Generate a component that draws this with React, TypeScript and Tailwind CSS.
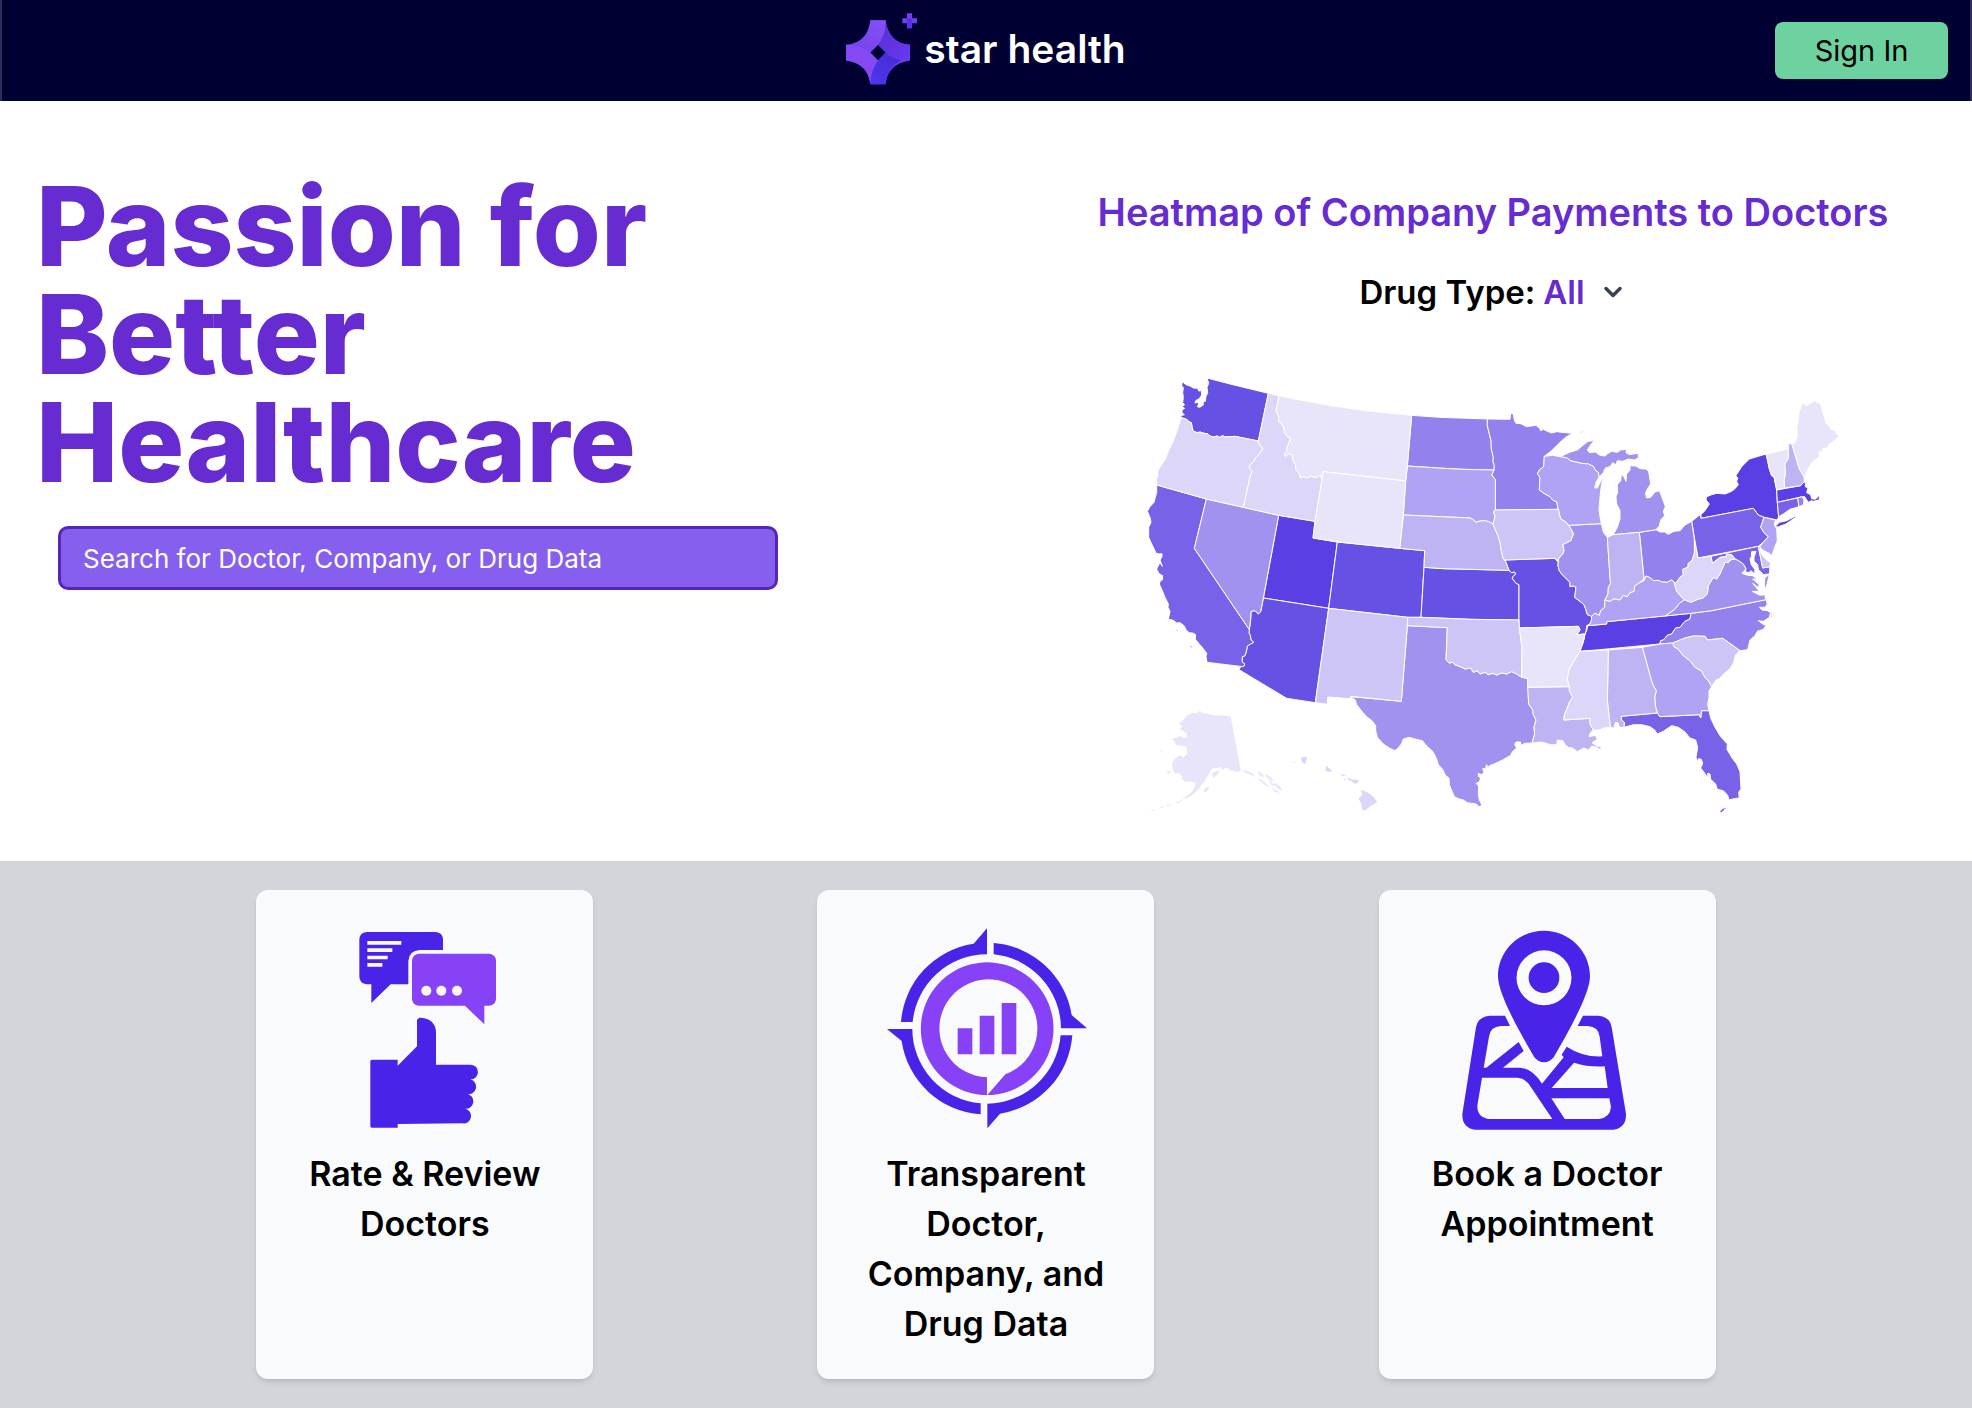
import type { ReactNode } from "react";
import { ChevronDown } from "lucide-react";

type Shade = { fill: string; shapes: Record<string, string> };

// State outlines grouped by payment bucket, darkest first.
const shades: Shade[] = [
  {
    fill: "#5a40e4",
    shapes: {
      UT: "M446 464L555 482 549 532 622 544 596 743 400 712Z",
      NY: "M1713 473L1713 462 1725 450 1738 430 1728 418 1730 408 1745 402 1760 398 1785 400 1805 392 1815 384 1825 372 1820 362 1824 352 1817 346 1835 318 1858 295 1885 287 1908 280 1913 300 1918 325 1925 345 1932 348 1940 388 1942 425 1946 468 1942 478 1902 470 1885 463 1870 443ZM1938 495L1948 485 1970 480 2000 464 1995 471 1968 490 1940 500Z",
      TN: "M1373 795L1430 790 1430 783 1683 758 1680 775 1665 782 1650 800 1637 802 1625 820 1612 824 1600 838 1592 840 1590 850 1410 867 1350 872 1354 860 1358 850 1362 835 1365 820 1370 810Z",
      MA: "M1940 388L2012 375 2018 364 2026 365 2026 378 2034 382 2030 396 2042 402 2045 414 2056 416 2064 408 2060 404 2069 408 2067 418 2050 422 2044 420 2036 425 2030 418 2024 408 2017 408 1942 425Z",
    },
  },
  {
    fill: "#6651e5",
    shapes: {
      WA: "M157 63L168 72 182 77 190 82 203 83 206 91 214 90 215 103 208 114 197 120 195 127 203 125 206 130 202 138 209 140 220 133 219 124 226 122 228 106 233 98 231 80 236 68 231 52 300 70 415 98 385 241 350 234 315 227 285 229 278 225 268 230 262 226 250 229 240 226 232 219 222 218 210 214 202 216 190 212 188 206 186 198 184 186 178 184 170 176 154 171 152 165 163 162 156 156 156 148 164 143 156 138 164 132 158 126 160 110 158 95 160 82 155 74Z",
      CO: "M622 544L809 563 884 570 882 620 873 770 833 770 596 743Z",
      KS: "M882 620L940 624 1137 629 1145 636 1154 634 1157 640 1149 648 1147 654 1153 661 1158 668 1167 672 1167 778 1020 776 873 770Z",
      MO: "M1125 598L1275 593 1280 600 1285 603 1284 615 1288 630 1295 640 1305 650 1320 665 1320 678 1330 676 1338 680 1336 695 1334 710 1350 722 1362 732 1368 748 1372 762 1385 767 1384 780 1380 790 1370 795 1368 812 1365 820 1340 822 1348 812 1350 806 1345 797 1168 802 1167 778 1167 672 1158 668 1153 661 1147 654 1149 648 1157 640 1154 634 1145 636 1137 629Z",
      AZ: "M400 712L596 743 556 1026 470 1013 327 927 332 918 342 916 344 910 336 903 337 888 345 885 350 868 352 856 362 850 371 845 363 838 361 825 357 817 358 807 362 775 363 752 375 750 385 760 392 753Z",
    },
  },
  {
    fill: "#7862e8",
    shapes: {
      CA: "M80 373L229 415 193 563 358 807 357 817 361 825 363 838 371 845 362 850 352 856 350 868 345 885 337 888 336 903 344 910 342 916 338 918 231 905 228 888 230 878 218 862 206 848 196 836 197 822 188 817 178 816 168 808 163 796 150 786 140 787 130 779 115 776 120 752 114 740 115 730 104 708 97 690 88 670 91 660 97 658 98 645 88 640 80 626 83 618 90 606 97 617 90 598 96 588 96 579 88 580 78 578 73 566 66 552 56 530 56 500 63 485 60 470 52 452 60 438 72 425 76 410 80 396Z M119 806l8 3-4 2zM132 806l14 3-4 3zM175 852l9 4 6 3-6 2zM176 873l6 6-3 1z",
      PA: "M1685 482L1710 462 1713 473 1870 443 1885 463 1902 470 1892 500 1902 516 1915 528 1900 545 1885 557 1704 592 1693 530Z",
      MD: "M1743 587L1885 557 1898 622 1920 618 1918 640 1900 642 1893 634 1885 627 1883 612 1872 602 1872 590 1878 572 1865 573 1864 588 1860 595 1864 612 1874 626 1875 640 1862 630 1858 636 1845 633 1848 625 1840 610 1825 600 1815 595 1805 582 1790 580 1788 588 1770 590 1760 598 1747 608Z",
      FL: "M1473 1067L1582 1057 1590 1068 1708 1062 1712 1072 1715 1050 1737 1050 1742 1072 1755 1100 1772 1128 1792 1150 1791 1166 1806 1192 1820 1210 1830 1233 1833 1285 1826 1295 1828 1312 1812 1314 1797 1318 1793 1304 1780 1290 1762 1286 1757 1270 1742 1256 1740 1240 1733 1238 1734 1252 1720 1232 1712 1222 1718 1208 1714 1196 1705 1194 1702 1204 1698 1190 1703 1160 1697 1138 1680 1132 1665 1114 1645 1100 1625 1095 1600 1112 1582 1120 1574 1108 1560 1098 1535 1092 1510 1092 1482 1100 1483 1085 1475 1078ZM1768 1354L1778 1343 1793 1340 1782 1349 1774 1357Z",
      CT: "M1942 425L2003 412 2007 438 1980 446 1960 460 1946 468Z",
    },
  },
  {
    fill: "#9382ed",
    shapes: {
      ND: "M845 164L930 170 1072 175 1072 195 1078 220 1083 240 1084 265 1090 290 1089 302 1093 315 1092 328 1000 326 940 323 832 316Z",
      MN: "M1072 175L1140 176 1142 158 1150 160 1153 178 1158 188 1172 189 1190 198 1204 196 1218 194 1228 202 1232 210 1240 206 1252 212 1265 217 1280 213 1295 215 1328 218 1308 229 1290 245 1265 270 1243 287 1241 318 1228 328 1222 340 1230 350 1228 388 1242 398 1260 408 1268 418 1280 424 1285 446 1096 448 1096 357 1085 343 1092 328 1093 315 1089 302 1090 290 1084 265 1083 240 1078 220 1072 195Z",
      OH: "M1528 515L1578 507 1590 514 1604 514 1615 521 1632 512 1650 510 1665 493 1685 482 1693 535 1695 560 1693 578 1686 600 1675 608 1674 620 1658 626 1660 642 1650 650 1640 670 1632 664 1624 658 1612 665 1595 664 1585 659 1570 660 1562 652 1548 646 1542 655Z",
      NC: "M1908 717L1912 730 1905 740 1888 740 1896 748 1912 750 1922 756 1918 770 1900 782 1885 780 1898 790 1908 794 1900 806 1882 812 1875 825 1860 838 1853 867 1830 870 1778 833 1733 838 1725 827 1690 826 1665 832 1628 847 1590 850 1592 840 1600 838 1612 824 1625 820 1637 802 1650 800 1665 782 1680 775 1683 758 1745 750ZM1914 732L1928 762 1918 796 1924 762Z",
      RI: "M2003 412L2017 408 2022 420 2020 433 2007 438Z",
    },
  },
  {
    fill: "#a192f0",
    shapes: {
      NV: "M229 415L340 440 446 464 400 712 392 753 385 760 375 750 363 752 362 775 358 807 193 563Z",
      TX: "M832 795L952 801 948 898 958 908 966 904 975 912 995 920 1005 925 1022 922 1030 935 1042 930 1050 940 1065 935 1075 942 1088 938 1100 943 1115 937 1130 940 1145 933 1160 940 1175 950 1193 953 1196 1030 1208 1048 1210 1062 1218 1078 1212 1100 1214 1120 1206 1147 1185 1148 1172 1154 1172 1144 1158 1144 1154 1152 1160 1162 1148 1172 1142 1184 1118 1198 1090 1211 1078 1215 1074 1222 1070 1212 1066 1224 1058 1224 1062 1234 1056 1242 1044 1238 1046 1248 1052 1252 1048 1264 1038 1268 1046 1276 1045 1300 1048 1318 1056 1334 1048 1338 1038 1330 1012 1326 1000 1318 985 1314 973 1308 966 1292 958 1272 957 1252 946 1244 938 1226 925 1212 920 1195 908 1172 892 1158 877 1140 858 1136 838 1130 820 1135 814 1150 806 1160 795 1170 778 1162 760 1150 742 1130 737 1110 737 1095 726 1080 710 1068 694 1050 680 1032 676 1018 662 1008 814 1022Z",
      IL: "M1315 494L1414 489 1420 515 1432 530 1440 650 1442 668 1435 680 1434 700 1425 718 1424 740 1412 750 1408 764 1394 758 1385 767 1372 762 1368 748 1362 732 1350 722 1334 710 1336 695 1338 680 1330 676 1320 678 1320 665 1305 650 1295 640 1288 630 1284 615 1285 595 1298 580 1302 570 1298 552 1310 546 1322 540 1330 520 1325 508Z",
      MI: "M1290 288L1308 280 1322 274 1342 268 1360 253 1375 242 1393 240 1382 252 1372 268 1378 276 1396 274 1410 284 1424 286 1432 280 1445 272 1462 275 1472 268 1490 266 1488 276 1498 282 1524 278 1526 290 1514 298 1495 295 1478 302 1462 300 1458 312 1448 306 1440 318 1426 322 1420 336 1407 350 1405 335 1397 330 1390 317 1375 310 1355 308 1320 300 1312 292ZM1341 223L1354 213 1366 207 1358 215ZM1500 315L1518 316 1530 324 1548 325 1556 332 1558 345 1562 370 1552 385 1546 398 1550 412 1562 410 1575 394 1588 390 1596 410 1606 438 1600 452 1604 465 1592 478 1588 495 1578 507 1528 515 1450 522 1462 500 1470 475 1470 450 1460 430 1458 408 1463 395 1462 372 1472 360 1474 342 1480 345 1488 362 1490 340 1500 328Z",
      VA: "M1815 595L1825 600 1840 610 1848 625 1836 638 1850 643 1868 645 1882 656 1868 655 1888 672 1884 680 1868 668 1888 692 1866 692 1890 704 1904 702 1908 717 1745 750 1683 758 1605 766 1635 745 1648 728 1663 717 1683 725 1705 715 1718 713 1732 700 1735 675 1750 650 1760 655 1770 640 1785 605 1795 606 1800 598ZM1905 650L1918 642 1912 668 1904 690 1903 668Z",
    },
  },
  {
    fill: "#b0a3f3",
    shapes: {
      SD: "M832 316L940 323 1000 326 1092 328 1085 343 1096 357 1096 448 1091 452 1095 470 1089 490 1078 484 1065 480 1050 481 1038 485 1028 476 1020 472 820 463 827 361Z",
      WI: "M1243 287L1268 284 1290 288 1312 292 1320 300 1355 308 1375 310 1390 317 1397 330 1405 335 1407 350 1398 365 1394 382 1402 382 1412 362 1422 345 1416 365 1412 390 1410 412 1407 445 1410 468 1414 489 1315 494 1308 484 1292 475 1288 460 1280 424 1268 418 1260 408 1242 398 1228 388 1230 350 1222 340 1228 328 1241 318Z",
      KY: "M1385 767L1394 758 1408 764 1412 750 1424 740 1425 718 1440 722 1452 714 1470 718 1480 704 1492 708 1500 696 1512 692 1514 676 1525 668 1542 660 1548 646 1562 652 1570 660 1585 659 1595 664 1612 665 1624 658 1632 664 1640 692 1650 704 1663 717 1648 728 1635 745 1605 766 1430 783 1430 790 1373 795 1380 790 1384 780Z",
      GA: "M1537 860L1590 850 1628 847 1632 858 1645 866 1660 885 1680 900 1695 920 1714 930 1725 950 1735 960 1745 978 1737 990 1737 1010 1733 1030 1737 1050 1715 1050 1712 1072 1708 1062 1590 1068 1582 1057 1577 1040 1574 1010 1579 990 1570 975 1563 955Z",
      NJ: "M1902 470L1936 478 1933 492 1940 505 1942 540 1934 560 1925 585 1918 578 1905 572 1888 560 1900 545 1915 528 1902 516 1892 500Z",
    },
  },
  {
    fill: "#beb4f3",
    shapes: {
      NE: "M820 463L1020 472 1028 476 1038 485 1050 481 1065 480 1078 484 1089 490 1095 505 1104 525 1110 545 1114 570 1119 592 1128 605 1137 629 940 624 882 620 884 570 809 563Z",
      IN: "M1432 530L1450 522 1528 515 1542 655 1530 665 1525 668 1514 676 1512 692 1500 696 1492 708 1480 704 1470 718 1452 714 1440 722 1425 718 1434 700 1435 680 1442 668 1440 650Z",
      AL: "M1435 868L1537 860 1563 955 1570 975 1579 990 1574 1010 1577 1040 1582 1057 1473 1067 1475 1078 1483 1085 1482 1100 1468 1100 1464 1086 1456 1086 1452 1102 1441 1100 1432 1020Z",
      LA: "M1193 980L1318 978 1318 990 1328 1010 1318 1025 1312 1042 1304 1060 1301 1078 1380 1073 1380 1090 1390 1108 1380 1118 1378 1128 1396 1124 1402 1136 1386 1146 1400 1156 1412 1158 1414 1169 1400 1160 1385 1156 1376 1168 1362 1162 1354 1166 1342 1173 1328 1162 1314 1160 1306 1152 1298 1140 1282 1138 1280 1152 1262 1152 1235 1144 1206 1147 1214 1120 1212 1100 1218 1078 1210 1062 1208 1048 1196 1030Z",
      NH: "M1975 265L1975 250 1985 248 2008 325 2022 348 2023 363 2012 375 1964 382 1962 360 1966 340 1964 310 1975 292Z",
    },
  },
  {
    fill: "#cdc5f6",
    shapes: {
      IA: "M1096 448L1285 446 1288 460 1292 475 1308 484 1315 494 1325 508 1330 520 1322 540 1310 546 1298 552 1302 570 1298 580 1285 595 1280 600 1275 593 1125 598 1119 592 1114 570 1110 545 1104 525 1095 505 1089 490 1095 470 1091 452Z",
      OK: "M833 770L873 770 1020 776 1167 778 1168 802 1176 860 1175 950 1160 940 1145 933 1130 940 1115 937 1100 943 1088 938 1075 942 1065 935 1050 940 1042 930 1030 935 1022 922 1005 925 995 920 975 912 966 904 958 908 948 898 952 801 832 795Z",
      NM: "M596 743L833 770 832 795 814 1022 662 1007 661 1014 593 1009 592 1031 556 1026Z",
      SC: "M1628 847L1665 832 1690 826 1725 827 1733 838 1778 833 1830 870 1816 884 1811 905 1802 922 1785 936 1768 954 1758 958 1745 978 1735 960 1725 950 1714 930 1695 920 1680 900 1660 885 1645 866 1632 858Z",
      DE: "M1885 557L1892 560 1890 570 1898 585 1912 600 1922 606 1920 618 1898 622Z",
    },
  },
  {
    fill: "#dcd6f9",
    shapes: {
      OR: "M154 171L170 176 178 184 184 186 186 198 188 206 190 212 202 216 210 214 222 218 232 219 240 226 250 229 262 226 268 230 278 225 285 229 315 227 350 234 385 241 388 252 399 263 390 278 378 290 372 302 360 312 357 322 367 332 361 345 340 440 229 415 80 373 79 355 84 345 83 332 94 312 105 298 115 272 130 240 142 208Z",
      ID: "M415 98L447 105 438 150 446 168 445 182 455 190 463 205 463 216 473 229 482 231 478 245 472 258 470 272 463 280 466 287 476 279 486 282 489 300 497 312 497 326 508 338 511 352 522 347 530 352 542 347 560 350 571 343 576 357 555 482 446 464 340 440 361 345 367 332 357 322 360 312 372 302 378 290 390 278 399 263 388 252 385 241Z",
      MS: "M1350 872L1435 868 1432 1020 1441 1100 1420 1102 1410 1108 1390 1108 1380 1090 1380 1073 1301 1078 1304 1060 1312 1042 1318 1025 1328 1010 1318 990 1318 978 1311 955 1318 925 1328 908 1335 895Z",
      WV: "M1693 540L1704 592 1743 587 1747 608 1760 598 1770 590 1788 588 1790 580 1805 582 1815 595 1800 598 1795 606 1785 605 1770 640 1760 655 1750 650 1735 675 1732 700 1718 713 1705 715 1683 725 1663 717 1650 704 1640 692 1634 672 1650 650 1660 642 1658 626 1674 620 1675 608 1686 600 1693 578Z",
      HI: "M512 1193L520 1188 530 1189 530 1197 525 1211 516 1204ZM588 1215L597 1222 608 1232 598 1234 586 1230ZM628 1240L650 1243 638 1247ZM640 1254l7 1-3 5zM652 1248L664 1256 684 1258 686 1264 676 1270 664 1262 656 1258ZM693 1287L712 1295 728 1306 742 1324 722 1336 704 1350 696 1346 694 1330 686 1314 697 1302ZM488 1204l8-2-4 4z",
    },
  },
  {
    fill: "#e8e5fb",
    shapes: {
      MT: "M447 105L520 120 610 136 700 149 845 164 832 316 827 361 579 333 576 357 571 343 560 350 542 347 530 352 522 347 511 352 508 338 497 326 497 312 489 300 486 282 476 279 466 287 463 280 470 272 472 258 478 245 482 231 473 229 463 216 463 205 455 190 445 182 446 168 438 150Z",
      WY: "M579 333L827 361 820 463 809 563 622 544 549 532 555 482 576 357Z",
      AR: "M1168 802L1345 797 1350 806 1348 812 1340 822 1365 820 1362 835 1358 850 1354 860 1350 872 1335 895 1328 908 1318 925 1311 955 1318 978 1193 980 1193 953 1175 950 1176 860Z",
      VT: "M1908 280L1975 265 1975 292 1964 310 1966 340 1962 360 1964 382 1940 388 1932 348 1925 345 1918 325 1913 300Z",
      ME: "M1985 248L1995 246 2002 225 2000 200 2004 185 2006 160 2018 125 2028 134 2042 128 2053 120 2072 130 2088 188 2098 196 2104 206 2114 208 2120 220 2128 227 2112 242 2098 250 2092 262 2076 264 2082 276 2068 272 2068 290 2054 298 2044 308 2034 325 2026 346 2022 348 2008 325Z",
      AK: "M146 1089L160 1078 172 1064 190 1056 200 1058 210 1050 216 1056 236 1060 252 1064 280 1064 302 1068 333 1231 318 1234 300 1228 288 1220 278 1228 270 1218 262 1222 248 1222 236 1240 224 1262 214 1272 204 1288 190 1300 176 1310 164 1314 156 1316 176 1302 188 1290 194 1278 196 1266 180 1262 166 1264 154 1254 158 1250 148 1238 134 1238 128 1224 126 1206 134 1194 150 1184 160 1190 172 1180 170 1158 152 1156 136 1152 134 1142 124 1134 138 1132 150 1126 164 1132 172 1128 168 1116 158 1110 150 1104 156 1096ZM246 1238L262 1230 270 1228 264 1240 250 1252ZM333 1229L350 1230 366 1238 380 1250 366 1244 350 1238ZM380 1230L392 1236 404 1248 396 1248 386 1240ZM404 1238L420 1248 432 1262 422 1260 410 1250ZM378 1252L396 1258 410 1270 420 1280 404 1272 392 1262ZM412 1258L428 1266 438 1276 426 1274ZM434 1266L450 1276 457 1291 446 1286 438 1278ZM424 1282L438 1288 450 1296 436 1294ZM220 1290L232 1278 238 1282 226 1296ZM110 1234l10-4 2 6-8 3zM84 1164l10 5 10 8-8-3zM158 1317L142 1323 136 1330 148 1326ZM126 1328L112 1333 110 1337 122 1333ZM102 1336l-14 5 2 3 10-4zM74 1347l-12 3 2 2 9-2z",
    },
  },
];

function UsHeatmap() {
  return (
    <svg viewBox="0 40 2178 1340" className="w-full max-w-[726px]" role="img" aria-label="Payments by state">
      {shades.map((shade) => (
        <g key={shade.fill} fill={shade.fill} stroke="#ffffff" strokeLinejoin="round">
          {Object.entries(shade.shapes).map(([name, d]) => (
            <path key={name} d={d} strokeWidth={name === "HI" || name === "AK" ? 0 : 3} />
          ))}
        </g>
      ))}
    </svg>
  );
}

function StarLogo() {
  return (
    <svg viewBox="84 36 216 218" className="h-[73px] w-[72px]" aria-hidden="true">
      <defs>
        <linearGradient id="starTop" x1="0" y1="1" x2="1" y2="0">
          <stop offset="0" stopColor="#7440e8" />
          <stop offset="1" stopColor="#8550f7" />
        </linearGradient>
        <linearGradient id="starRight" x1="0" y1="0" x2="1" y2="1">
          <stop offset="0" stopColor="#5530cf" />
          <stop offset="1" stopColor="#6a38f4" />
        </linearGradient>
        <linearGradient id="starBottom" x1="1" y1="0" x2="0" y2="1">
          <stop offset="0" stopColor="#452bd0" />
          <stop offset="1" stopColor="#4f35ee" />
        </linearGradient>
      </defs>
      <path
        d="M157 60H203Q212 128 276 134V181Q208 192 203 252H157Q150 190 84 181V134Q150 126 157 60ZM180 134L157 157L180 181L203 157Z"
        fill="#6c3cec"
        fillRule="evenodd"
      />
      <path d="M84 134Q126 131 157 157L180 181Q160 210 157 252Q150 190 84 181Z" fill="#8549f4" />
      <path d="M157 60H203V75Q200 118 157 157Q134 135 102 132Q152 120 157 60Z" fill="url(#starTop)" />
      <path d="M203 70Q212 128 276 134V181Q232 180 203 157L180 134Q203 108 203 70Z" fill="url(#starRight)" />
      <path d="M180 181L203 157Q222 174 250 180Q208 198 203 252H157Q158 212 180 181Z" fill="url(#starBottom)" />
      <path d="M267 39H282V54H297V69H282V84H267V69H253V54H267Z" fill="#7440ee" />
      <path d="M267 54H282V69H267ZM267 69H282V84H267Z" fill="#5732e8" />
    </svg>
  );
}

function ReviewIcon() {
  return (
    <svg viewBox="-46 54 600 600" className="size-[200px]" aria-hidden="true">
      <path
        d="M79 63H286Q308 65 308 87V117H238Q206 119 204 150V220H151L93 276V220H79Q57 218 57 196V87Q57 65 79 63Z"
        fill="#4a23e8"
      />
      <path d="M81 90H183V101H81ZM81 112H156V123H81ZM81 134H142V145H81ZM81 156H126V167H81Z" fill="#f9fafc" />
      <path
        d="M235 128H447Q465 130 467 148V264Q465 282 447 284H432V340L374 284H235Q217 282 215 264V148Q217 130 235 128Z"
        fill="#8742f7"
      />
      <g fill="#f9fafc">
        <circle cx="258" cy="239" r="15" />
        <circle cx="303" cy="239" r="15" />
        <circle cx="350" cy="239" r="15" />
      </g>
      <path
        d="M95 446H172V464L230 406V328Q232 320 241 320Q284 323 287 362V461H392A22 22 0 0 1 390 505A22 22 0 0 1 380 549A22 22 0 0 1 374 593A22 22 0 0 1 366 637L172 639V650H95Q90 650 90 645V451Q90 446 95 446Z"
        fill="#4a23e8"
      />
    </svg>
  );
}

function CompassIcon() {
  return (
    <svg viewBox="49 53 600 600" className="size-[200px] overflow-visible" aria-hidden="true">
      <g fill="#4a23e8">
        <path d="M352 51V129A224 224 0 0 0 129 332H94A257 257 0 0 1 312 97Z" />
        <path d="M372 95A257 257 0 0 1 606 311L652 351H574A224 224 0 0 0 372 129Z" />
        <path d="M608 372A257 257 0 0 1 391 607L353 651V577A224 224 0 0 0 573 372Z" />
        <path d="M333 609A257 257 0 0 1 96 389L52 353H128A224 224 0 0 0 333 576Z" />
      </g>
      <path d="M352 551A199 199 0 1 1 353 551L407 489A147 147 0 1 0 352 498Z" fill="#8742f7" />
      <path d="M264 351H308V429H264ZM330 313H374V429H330ZM396 275H440V429H396Z" fill="#8742f7" />
    </svg>
  );
}

function MapPinIcon() {
  return (
    <svg viewBox="22 55 600 600" className="size-[200px] overflow-visible" aria-hidden="true">
      <g fill="#4a23e8" fillRule="evenodd">
        <path d="M313 60C388 60 451 120 451 197C451 245 400 340 342 440Q330 455 313 455Q296 455 284 440C226 340 175 245 175 197C175 120 238 60 313 60ZM313 119A82 82 0 1 0 313 284A82 82 0 1 0 313 119Z" />
        <circle cx="313" cy="201" r="46" />
        <path d="M196 315L211 346H184Q151 348 148 378L132 471H140L237 394L252 421L190 471H240Q278 473 307 519L372 440L366 432L381 408Q430 440 488 437L480 378Q477 348 444 346H414L430 315H476Q512 319 516 350L559 610Q560 652 520 657H107Q67 652 68 610L109 350Q114 319 150 315ZM127 501L113 585Q112 620 148 625H338L272 527Q258 503 234 501ZM403 456L336 532H504L495 467Q448 470 403 456ZM335 563L375 625H478Q512 620 514 588L509 563Z" />
      </g>
    </svg>
  );
}

function FeatureCard({ icon, title }: { icon: ReactNode; title: string }) {
  return (
    <article className="flex w-[337px] flex-col items-center rounded-xl bg-[#f9fafc] px-8 pt-[39px] pb-[30px] shadow-md">
      {icon}
      <h3 className="mt-5 text-center text-[34px] leading-[50px] font-semibold text-black">{title}</h3>
    </article>
  );
}

export default function App() {
  return (
    <div className="flex min-h-screen flex-col bg-white font-['Inter',sans-serif]">
      <header className="grid h-[101px] grid-cols-[1fr_auto_1fr] items-center border-x-2 border-[#2d2d55] bg-[#000032] px-[22px]">
        <span />
        <a href="#" className="flex items-center gap-1.5 pb-1 text-white">
          <StarLogo />
          <span className="text-[39px] leading-none font-semibold">star health</span>
        </a>
        <button
          type="button"
          className="h-[57px] w-[173px] justify-self-end rounded-lg bg-[#6ed1a0] text-[29px] text-black"
        >
          Sign In
        </button>
      </header>

      <main className="grid grid-cols-2 gap-[120px] px-8 pt-[71px] pb-10">
        <section>
          <h1 className="max-w-[720px] pl-1 text-[110px] leading-[108px] font-extrabold text-[#662cd1]">
            Passion for
            <br />
            Better
            <br />
            Healthcare
          </h1>
          <input
            type="search"
            aria-label="Search for Doctor, Company, or Drug Data"
            placeholder="Search for Doctor, Company, or Drug Data"
            className="mt-[30px] ml-[26px] h-16 w-[720px] rounded-[10px] border-3 border-[#5826b6] bg-[#865fee] px-[22px] text-[26px] text-white placeholder:text-white"
          />
        </section>
        <section className="flex flex-col items-center pt-4">
          <h2 className="text-[38px] leading-12 font-semibold text-[#662cd1]">Heatmap of Company Payments to Doctors</h2>
          <div className="mt-9 flex items-center text-[33px] leading-10 font-semibold">
            <label htmlFor="drug-type" className="mr-2 text-black">
              Drug Type:
            </label>
            <div className="grid items-center">
              <select
                id="drug-type"
                defaultValue="All"
                className="col-start-1 row-start-1 h-10 appearance-none bg-transparent pr-[42px] text-[#662cd1] field-sizing-content"
              >
                <option>All</option>
              </select>
              <ChevronDown
                className="pointer-events-none col-start-1 row-start-1 size-7 justify-self-end text-[#374151]"
                strokeWidth={3}
              />
            </div>
          </div>
          <div className="mt-[62px] flex w-full justify-center">
            <UsHeatmap />
          </div>
        </section>
      </main>

      <section className="grow bg-[#d2d5da] pt-[29px] pb-[29px]">
        <div className="mx-auto flex w-[74%] justify-between">
          <FeatureCard icon={<ReviewIcon />} title="Rate & Review Doctors" />
          <FeatureCard icon={<CompassIcon />} title="Transparent Doctor, Company, and Drug Data" />
          <FeatureCard icon={<MapPinIcon />} title="Book a Doctor Appointment" />
        </div>
      </section>
    </div>
  );
}
